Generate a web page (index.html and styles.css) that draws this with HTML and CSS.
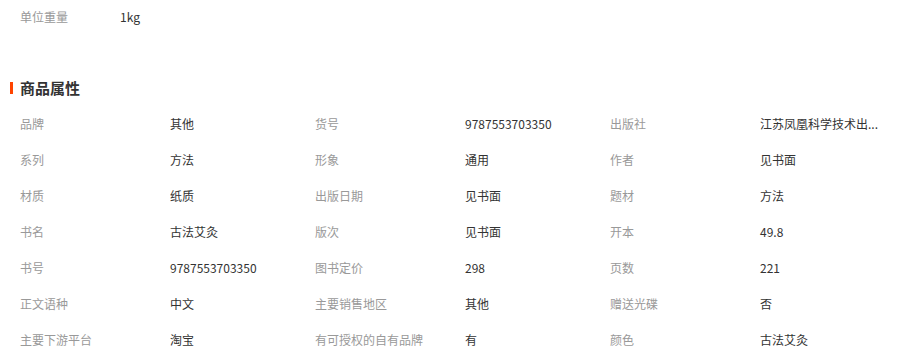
FILE: index.html
```html
<!DOCTYPE html>
<html lang="zh-CN">
<head>
<meta charset="utf-8">
<link rel="stylesheet" href="styles.css">
</head>
<body>
<div class="page">
  <div class="unit-row">
    <span class="unit-label">单位重量</span>
    <span class="unit-value">1kg</span>
  </div>
  <h2 class="section-title">商品属性</h2>
  <div class="attrs">
    <div class="k">品牌</div><div class="v">其他</div>
    <div class="k">货号</div><div class="v">9787553703350</div>
    <div class="k">出版社</div><div class="v" title="江苏凤凰科学技术出版社">江苏凤凰科学技术出...</div>

    <div class="k">系列</div><div class="v">方法</div>
    <div class="k">形象</div><div class="v">通用</div>
    <div class="k">作者</div><div class="v">见书面</div>

    <div class="k">材质</div><div class="v">纸质</div>
    <div class="k">出版日期</div><div class="v">见书面</div>
    <div class="k">题材</div><div class="v">方法</div>

    <div class="k">书名</div><div class="v">古法艾灸</div>
    <div class="k">版次</div><div class="v">见书面</div>
    <div class="k">开本</div><div class="v">49.8</div>

    <div class="k">书号</div><div class="v">9787553703350</div>
    <div class="k">图书定价</div><div class="v">298</div>
    <div class="k">页数</div><div class="v">221</div>

    <div class="k">正文语种</div><div class="v">中文</div>
    <div class="k">主要销售地区</div><div class="v">其他</div>
    <div class="k">赠送光碟</div><div class="v">否</div>

    <div class="k">主要下游平台</div><div class="v">淘宝</div>
    <div class="k">有可授权的自有品牌</div><div class="v">有</div>
    <div class="k">颜色</div><div class="v">古法艾灸</div>
  </div>
</div>
</body>
</html>
```

FILE: styles.css
```css
html, body {
  margin: 0;
  padding: 0;
  background: #fff;
}
body {
  font-family: "Noto Sans CJK SC", "Noto Sans", sans-serif;
  font-size: 12px;
  color: #333;
}
.page {
  width: 910px;
}
.unit-row {
  display: flex;
  align-items: center;
  height: 33px;
  padding-left: 20px;
}
.unit-label {
  width: 100px;
  color: #999;
}
.unit-value {
  color: #333;
}
.section-title {
  margin: 46px 0 0 0;
  padding-left: 20px;
  position: relative;
  font-size: 15px;
  font-weight: bold;
  line-height: 18px;
  color: #333;
}
.section-title::before {
  content: "";
  position: absolute;
  left: 10px;
  top: 3px;
  width: 3px;
  height: 12px;
  background: #ff4400;
}
.attrs {
  display: grid;
  grid-template-columns: 150px 145px 150px 145px 150px 145px;
  grid-auto-rows: 36px;
  padding-left: 20px;
  margin-top: 9px;
}
.k, .v {
  display: flex;
  align-items: center;
  line-height: 16px;
  white-space: nowrap;
}
.k {
  color: #999;
}
.v {
  color: #333;
}
```
